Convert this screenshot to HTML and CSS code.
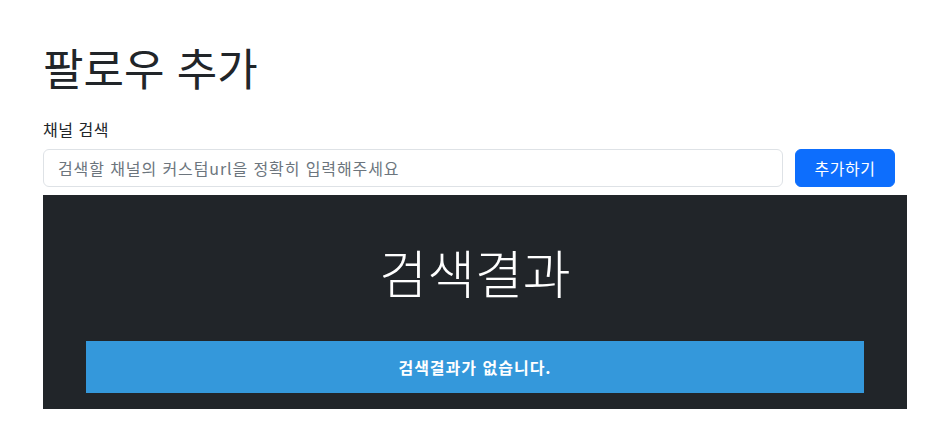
FILE: index.html
```html
<!DOCTYPE html>
<html lang="ko">
<head>
<meta charset="utf-8">
<link rel="stylesheet" href="styles.css">
</head>
<body>
<main class="page">
  <h1 class="title">팔로우 추가</h1>
  <label class="label" for="q">채널 검색</label>
  <div class="search-row">
    <input id="q" class="search-input" type="text" placeholder="검색할 채널의 커스텀url을 정확히 입력해주세요">
    <button class="add-btn" type="button">추가하기</button>
  </div>
  <section class="results">
    <h2 class="results-title">검색결과</h2>
    <div class="empty">검색결과가 없습니다.</div>
  </section>
</main>
</body>
</html>
```

FILE: styles.css
```css
* { box-sizing: border-box; }
body {
  margin: 0;
  background: #fff;
  color: #212529;
  font-family: "Noto Sans CJK KR", "Noto Sans", sans-serif;
  font-size: 16px;
}
.page {
  padding: 41px 45px 0 43px;
}
.title {
  margin: 0 0 23px;
  font-size: 44px;
  font-weight: 400;
  line-height: 53px;
}
.label {
  display: block;
  font-size: 16px;
  line-height: 24px;
  margin-bottom: 8px;
  letter-spacing: 0.5px;
}
.search-row {
  display: flex;
  gap: 12px;
  padding-right: 12px;
  margin-bottom: 8px;
}
.search-input {
  flex: 1;
  height: 38px;
  border: 1px solid #dee2e6;
  border-radius: 6px;
  padding: 6px 14px;
  font-family: inherit;
  font-size: 16px;
  letter-spacing: 0.9px;
  color: #212529;
}
.search-input::placeholder { color: #6c757d; }
.add-btn {
  width: 100px;
  height: 38px;
  border: 1px solid #0d6efd;
  background: #0d6efd;
  color: #fff;
  border-radius: 6px;
  font-family: inherit;
  font-size: 16px;
  letter-spacing: 0.5px;
}
.results {
  background: #212529;
  height: 214px;
  padding: 43px 43px 0;
}
.results-title {
  margin: 0 0 36px;
  text-align: center;
  color: #fff;
  font-size: 52px;
  font-weight: 300;
  line-height: 67px;
}
.empty {
  background: #3498db;
  height: 52px;
  display: flex;
  align-items: center;
  justify-content: center;
  color: #fff;
  font-weight: 700;
  font-size: 16px;
  letter-spacing: 1px;
}
```
